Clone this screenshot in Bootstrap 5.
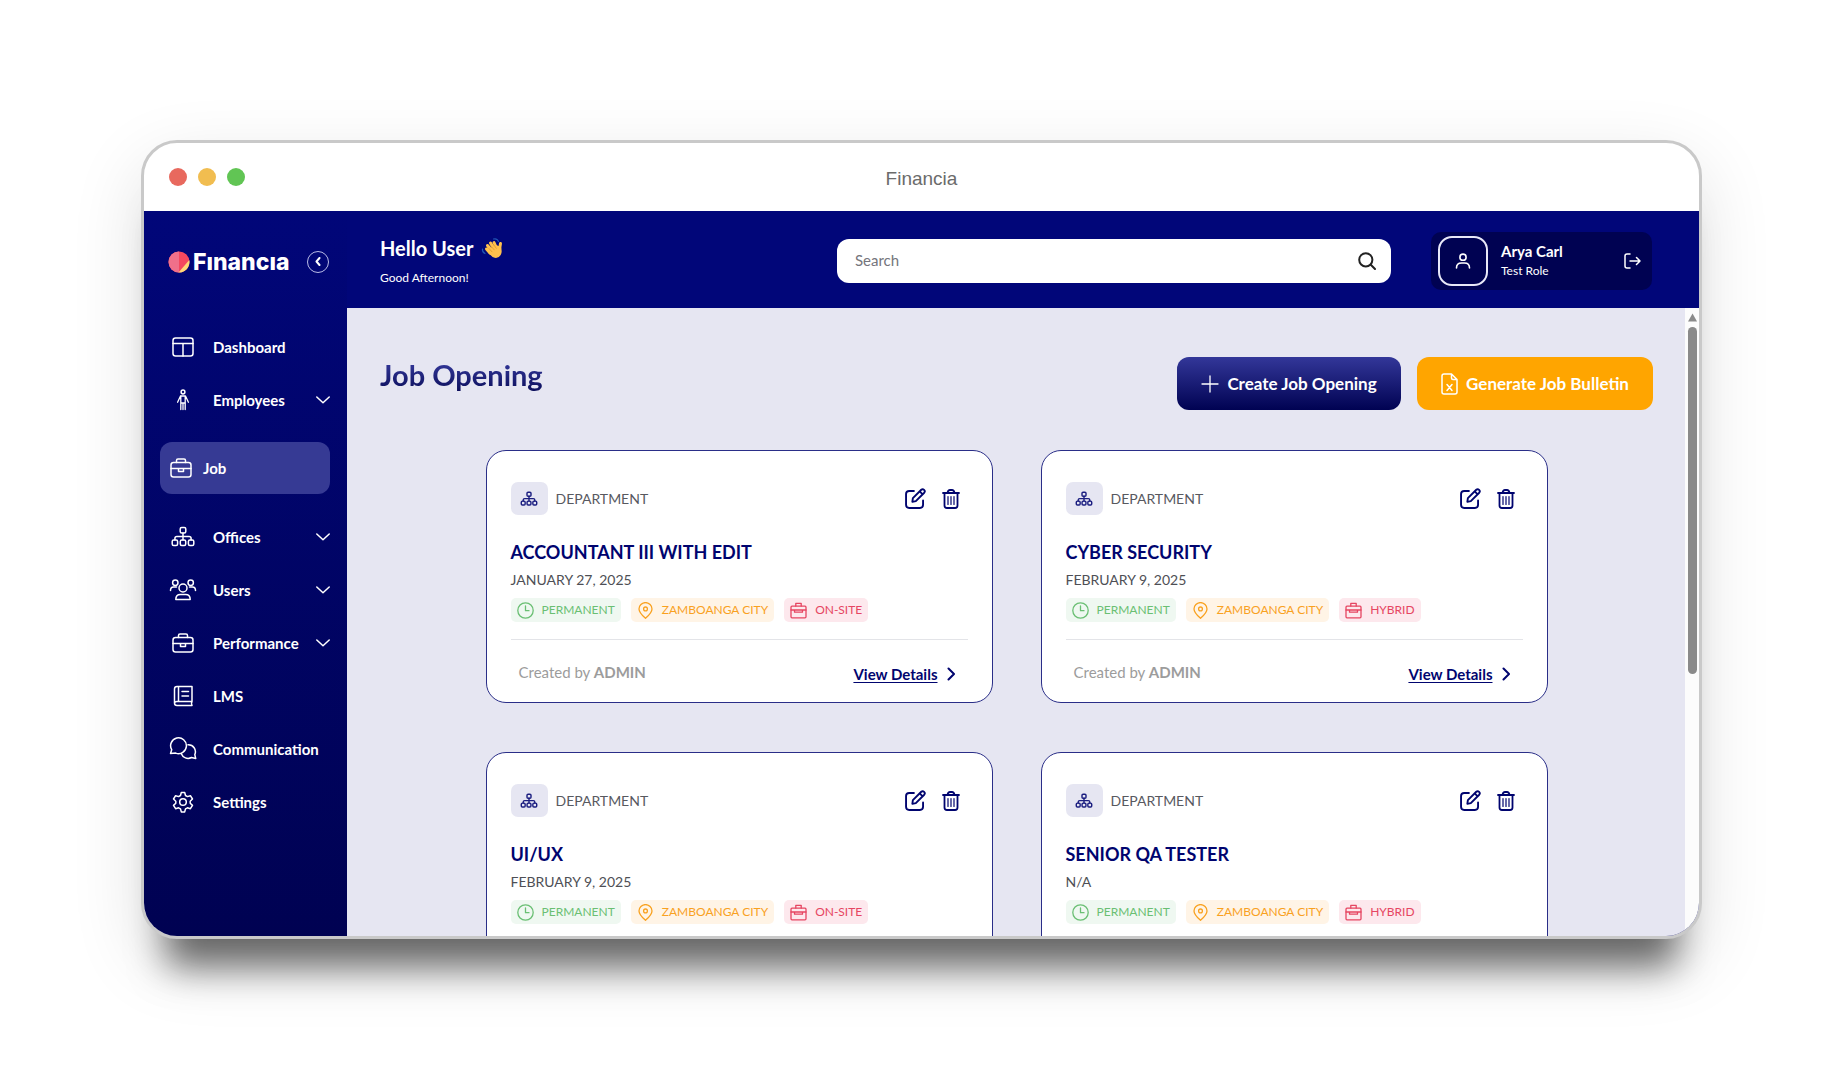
<!DOCTYPE html>
<html lang="en">
<head>
<meta charset="utf-8">
<meta name="viewport" content="width=device-width, initial-scale=1">
<title>Financia</title>
<link href="https://cdn.jsdelivr.net/npm/bootstrap@5.3.0/dist/css/bootstrap.min.css" rel="stylesheet">
<style>
  :root { --navy: #00046f; --navy-top: #010679; --navy-deep: #000252; --pale: #e6e6f2; }
  body { font-family: Lato, "Open Sans", sans-serif; background: #fff; color: #555; }
  svg { fill: none; stroke: currentColor; stroke-linecap: round; stroke-linejoin: round; flex: none; display: block; }
  svg.solid { stroke: none; }
  button { font-family: inherit; }
  .stage { padding: 140px 140px 141px 141px; height: 100vh; min-height: 700px; overflow: hidden; }
  .window { height: 100%; border: 3px solid #c9c9c9; border-radius: 36px; overflow: hidden; background: #fff;
    box-shadow: 0 53px 36px -25px rgba(0,0,0,.56), 0 24px 72px rgba(0,0,0,.12); }
  .titlebar { height: 68px; padding: 0 25px; display: grid; grid-template-columns: 1fr auto 1fr; align-items: center; flex: none; }
  .titlebar h1 { font: 400 19px/24px "Liberation Sans", Arial, sans-serif; color: #6b6b6b; margin: 0; padding-top: 3px; }
  .light { width: 18px; height: 18px; border-radius: 50%; }
  .app { background: linear-gradient(#010679, #000252); }
  .side { width: 203px; flex: none; color: #fff; }
  .brandrow { height: 109px; padding: 0 18px 8px 24px; }
  .wordmark { font: 800 23px/28px Inter, sans-serif; color: #fff; text-decoration: none; }
  .collapse-btn { width: 22px; height: 22px; border: 1px solid #b9bbe6; border-radius: 50%; background: none; color: #fff; padding: 0; }
  .menu a { height: 53px; margin: 0 17px 0 16px; padding-left: 9px; gap: 16px; color: #fff; text-decoration: none; font-size: 15px; font-weight: 700; line-height: 20px; }
  .menu svg { width: 28px; height: 28px; }
  .menu .chev { width: 14px; height: 14px; margin-left: auto; }
  .menu a.current { height: 52px; margin-top: 16px; margin-bottom: 16px; padding-left: 7px; gap: 8px; border-radius: 12px; background: #363a94; }
  .top { height: 97px; padding: 2px 47px 0 33px; color: #fff; background: var(--navy-top); flex: none; }
  .hello { font-size: 20px; line-height: 26px; font-weight: 700; margin: 0; }
  .greet { font-size: 12px; line-height: 18px; margin: 8px 0 0; }
  .searchbox { width: 554px; height: 44px; border-radius: 12px; background: #fff; color: #222; padding: 0 15px 0 16px; margin-right: 40px; }
  .searchbox input { border: 0; outline: 0; background: none; color: #555; font-size: 15px; }
  .searchbox input::placeholder { color: #75757c; opacity: 1; }
  .user { width: 221px; height: 58px; border-radius: 10px; background: #000252; padding: 0 11px 0 7px; }
  .face { width: 50px; height: 50px; border: 2px solid #e8e8f8; border-radius: 14px; }
  .who { font-size: 15px; line-height: 20px; font-weight: 700; }
  .role { font-size: 12px; line-height: 20px; }
  .plain { border: 0; background: none; padding: 0; color: inherit; }
  .page { background: var(--pale); overflow: hidden; }
  .content { padding: 49px 32px 0 33px; }
  .heading { font-size: 29px; line-height: 36px; font-weight: 700; margin: 0; color: transparent;
    background: linear-gradient(#333799 15%, #0c0f5c 95%); -webkit-background-clip: text; background-clip: text; }
  .act { height: 53px; border: 0; border-radius: 12px; color: #fff; font-size: 17px; line-height: 24px; font-weight: 700; gap: 8px; }
  .act-new { width: 224px; background: linear-gradient(#333799, #000252); }
  .act-gen { width: 236px; background: #ffa500; }
  .jobs { max-width: 1062px; margin: 40px auto 0; display: grid; grid-template-columns: 1fr 1fr; gap: 49px 48px; }
  .job { height: 253px; border: 1px solid #2a2e88; border-radius: 20px; background: #fff; padding: 31px 24px 0; }
  .tile { width: 37px; height: 33px; border-radius: 7px; background: var(--pale); color: #1b1e80; }
  .dept { font-size: 14px; line-height: 20px; color: #58595f; }
  .job h3 { font-size: 18px; line-height: 24px; font-weight: 700; color: var(--navy); margin: 25px 0 0; }
  .date { font-size: 14px; line-height: 20px; margin: 6px 0 0; color: #4e4f55; }
  .chips { margin-top: 8px; gap: 10px; }
  .chip { height: 24px; border-radius: 5px; padding: 0 6px; gap: 8px; font-size: 12px; line-height: 18px; }
  .chip-g { background: #eff8f1; color: #6abf73; }
  .chip-o { background: #fff4e6; color: #f9a11f; }
  .chip-r { background: #fde8ed; color: #e64562; }
  .foot { border-top: 1px solid #e3e4e8; margin-top: 17px; padding: 22px 13px 0 8px; }
  .by { font-size: 15px; line-height: 20px; color: #9c9c9c; }
  .more { font-size: 15px; line-height: 20px; font-weight: 700; color: var(--navy); gap: 9px; text-decoration: none; margin-top: 2px; }
  .more span { text-decoration: underline; text-underline-offset: 2px; }
  .track { width: 14px; background: #fcfcfc; padding: 5px 2px 0 3px; flex: none; }
  .thumb { height: 347px; border-radius: 5px; background: #8a8a8a; margin-top: 5px; }
</style>
<script src="https://cdn.jsdelivr.net/npm/bootstrap@5.3.0/dist/js/bootstrap.bundle.min.js"></script>
</head>
<body>
<svg class="d-none" aria-hidden="true">
  <symbol id="i-grid" viewBox="0 0 28 28"><rect x="4" y="5" width="20" height="18" rx="2.5"/><path d="M4 10.5h20M14 10.5V23"/></symbol>
  <symbol id="i-person" viewBox="0 0 28 28"><circle cx="14" cy="6" r="1.9"/><path d="M11.500 10h5l2.900 6.200M11.500 10l-2.900 6.200M11.800 10.500V23.500M16.200 10.500V23.500M14 17v6.500M11.800 17h4.400" stroke-width="1.300"/></symbol>
  <symbol id="i-case" viewBox="0 0 28 28"><rect x="4" y="8.500" width="20" height="14.500" rx="2.500"/><path d="M9.500 8.500V6.500q0-1.500 1.500-1.500h6q1.500 0 1.500 1.500v2M4 14.500h20M11.500 14.500v3h5v-3"/></symbol>
  <symbol id="i-org" viewBox="0 0 28 28"><rect x="11.200" y="4.500" width="5.600" height="5.600" rx="1.500"/><rect x="3.200" y="17" width="5.400" height="5.400" rx="1.500"/><rect x="11.300" y="17" width="5.400" height="5.400" rx="1.500"/><rect x="19.400" y="17" width="5.400" height="5.400" rx="1.500"/><path d="M14 10v7M5.900 17v-1.500q0-2 2-2h12.200q2 0 2 2V17"/></symbol>
  <symbol id="i-users" viewBox="0 0 28 28"><circle cx="14" cy="12" r="4"/><circle cx="6.300" cy="6.700" r="2.700"/><circle cx="21.700" cy="6.700" r="2.700"/><path d="M6.800 23.500q0-5 4.500-5h5.400q4.500 0 4.500 5zM1.500 14.500q0-3.500 3-3.500h3M26.500 14.500q0-3.500-3-3.500h-3"/></symbol>
  <symbol id="i-book" viewBox="0 0 28 28"><path d="M23 19.500V4.500H8Q5.500 4.500 5.500 7v14q0 2.500 2.500 2.500h15M23 19.500H8q-2.500 0-2.500 2M23 19.500q-1.200 2 0 4M9.500 4.500v15M13 9.500h6.500M13 14h6.500"/></symbol>
  <symbol id="i-chat" viewBox="0 0 28 28"><path d="M1.500 18.500l1.200-3.800a7.900 7.900 0 1 1 4 3.400zM19 9.800a7 7 0 0 1 6.800 9.800l.9 3.900-4.200-1a7.300 7.300 0 0 1-10.300-4"/></symbol>
  <symbol id="i-gear" viewBox="0 0 28 28"><circle cx="14" cy="14" r="3.300"/><path d="M12.300 4.500h3.400l.8 3 1.900 1.100 3-.9 2.100 3.300-2.300 2.200v2l2.300 2.200-2.100 3.300-3-.9-1.900 1.100-.8 3h-3.400l-.8-3-1.900-1.100-3 .9-2.100-3.300 2.300-2.200v-2l-2.300-2.200 2.100-3.300 3 .9 1.900-1.100z"/></symbol>
  <symbol id="i-down" viewBox="0 0 14 14"><path d="M.8 4l6.200 5.800L13.200 4"/></symbol>
  <symbol id="i-edit" viewBox="0 0 20 20"><path d="M8.500 2.800H4Q1 2.800 1 5.800V16q0 3 3 3h10.200q3 0 3-3v-4.200M7 13.200l.5-3.500 8-8q1.300-1.200 2.700.1t.1 2.700l-8 8zM14 3.200l2.800 2.800"/></symbol>
  <symbol id="i-trash" viewBox="0 0 18 20"><path d="M1 4h16M2.500 4v12.500Q2.500 19 5 19h8q2.500 0 2.500-2.500V4M5.500 4q.5-3 2.500-3h2q2 0 2.500 3"/><path d="M6 7.500v8M9 7.500v8M12 7.500v8" stroke-width="1.200"/></symbol>
  <symbol id="i-clock" viewBox="0 0 17 17"><circle cx="8.500" cy="8.500" r="7.700"/><path d="M8.500 4v4.700H12"/></symbol>
  <symbol id="i-pin" viewBox="0 0 17 17"><path d="M8.500 16.300Q2 10.500 2 6.900a6.500 6.300 0 0 1 13 0Q15 10.500 8.500 16.300z"/><circle cx="8.500" cy="6.900" r="1.900"/></symbol>
  <symbol id="i-kit" viewBox="0 0 17 17"><rect x="1" y="4.200" width="15" height="11.600" rx="1"/><path d="M5.800 4V1.300h5.400V4M1 8h3.500v2.200h8V8H16M4.500 8h8"/></symbol>
  <symbol id="i-next" viewBox="0 0 8 14"><path d="M1.500 1.500L7 7l-5.500 5.500"/></symbol>
</svg>

<div class="stage">
  <div class="window d-flex flex-column">
    <div class="titlebar">
      <div class="d-flex" style="gap:11px">
        <span class="light" style="background:#e8695e"></span>
        <span class="light" style="background:#f1bd50"></span>
        <span class="light" style="background:#61c554"></span>
      </div>
      <h1>Financia</h1>
    </div>

    <div class="app d-flex flex-grow-1 overflow-hidden">
      <aside class="side">
        <div class="brandrow d-flex align-items-center">
          <a class="wordmark d-flex align-items-center" href="#" aria-label="Financia" style="gap:3px">
            <svg class="solid" width="22" height="22" viewBox="0 0 22 22"><circle cx="11" cy="11" r="10.500" fill="#f4485f"/><path d="M11 .5a10.500 10.500 0 0 0 0 21z" fill="#f0708a"/><path d="M21.300 9A10.500 10.500 0 0 1 10.500 21.500z" fill="#ffd978"/></svg>
            <span>Fınancıa</span>
          </a>
          <button class="collapse-btn ms-auto d-flex align-items-center justify-content-center" aria-label="Collapse sidebar">
            <svg width="6" height="9" viewBox="0 0 6 9" stroke-width="2"><path d="M4.500 1L1.500 4.500l3 3.500"/></svg>
          </button>
        </div>
        <nav class="menu d-flex flex-column" aria-label="Main">
          <a class="d-flex align-items-center" href="#"><svg stroke-width="1.500"><use href="#i-grid"/></svg>Dashboard</a>
          <a class="d-flex align-items-center" href="#"><svg stroke-width="1.500"><use href="#i-person"/></svg>Employees<svg class="chev" stroke-width="1.500"><use href="#i-down"/></svg></a>
          <a class="current d-flex align-items-center" href="#" aria-current="page"><svg stroke-width="1.500"><use href="#i-case"/></svg>Job</a>
          <a class="d-flex align-items-center" href="#"><svg stroke-width="1.500"><use href="#i-org"/></svg>Offices<svg class="chev" stroke-width="1.500"><use href="#i-down"/></svg></a>
          <a class="d-flex align-items-center" href="#"><svg stroke-width="1.500"><use href="#i-users"/></svg>Users<svg class="chev" stroke-width="1.500"><use href="#i-down"/></svg></a>
          <a class="d-flex align-items-center" href="#"><svg stroke-width="1.500"><use href="#i-case"/></svg>Performance<svg class="chev" stroke-width="1.500"><use href="#i-down"/></svg></a>
          <a class="d-flex align-items-center" href="#"><svg stroke-width="1.500"><use href="#i-book"/></svg>LMS</a>
          <a class="d-flex align-items-center" href="#"><svg stroke-width="1.500"><use href="#i-chat"/></svg>Communication</a>
          <a class="d-flex align-items-center" href="#"><svg stroke-width="1.500"><use href="#i-gear"/></svg>Settings</a>
        </nav>
      </aside>

      <div class="d-flex flex-column flex-grow-1">
        <header class="top d-flex align-items-center">
          <div class="me-auto">
            <p class="hello d-flex align-items-center" style="gap:8px">Hello User
              <svg class="solid" width="22" height="22" viewBox="0 0 22 22" role="img" aria-label="Waving hand">
                <g stroke="#ffc04d" stroke-width="3"><path d="M9 16L5.500 12M11 14L6.500 8.500M13 12L9.500 6M15.500 11l-2.500-5.500M18.500 12.500l1-6"/></g>
                <path d="M7.500 13.500l6.500-6 6 2.500q1.500 5-.3 8-2 3.500-6 2.800-3-.8-6.200-4.800z" fill="#ffc04d"/>
                <path d="M8 11.500l3 3.300M10.300 9.500l3 3.400M12.800 7.800l2.500 3.500" stroke="#e09a2d" stroke-width=".8"/>
                <path d="M1.500 12q-.5 3 2.500 4.500M12.500 2q3.500-1 5 2.500" stroke="#1f55b5" stroke-width="1.200"/>
              </svg>
            </p>
            <p class="greet">Good Afternoon!</p>
          </div>
          <div class="searchbox d-flex align-items-center">
            <input class="flex-grow-1" type="search" placeholder="Search" aria-label="Search">
            <svg width="18" height="18" viewBox="0 0 18 18" stroke-width="2"><circle cx="7.800" cy="7.800" r="6.600"/><path d="M12.800 12.800L17 17"/></svg>
          </div>
          <div class="user d-flex align-items-center">
            <div class="face d-flex align-items-center justify-content-center">
              <svg width="16" height="16" viewBox="0 0 16 16" stroke-width="1.600"><circle cx="8" cy="4.200" r="3.100"/><path d="M1.500 15q0-5 5-5h3q5 0 5 5"/></svg>
            </div>
            <div style="margin-left:13px"><div class="who">Arya Carl</div><div class="role">Test Role</div></div>
            <button class="plain ms-auto" aria-label="Log out"><svg width="17" height="16" viewBox="0 0 17 16" stroke-width="1.500"><path d="M6 1H3Q1 1 1 3v10q0 2 2 2h3M6 8h10M12.500 4.500L16 8l-3.500 3.500"/></svg></button>
          </div>
        </header>

        <div class="d-flex flex-grow-1 overflow-hidden">
          <main class="page flex-grow-1">
            <div class="content">
              <div class="d-flex align-items-start">
                <h2 class="heading me-auto">Job Opening</h2>
                <div class="d-flex gap-3">
                  <button class="act act-new d-flex align-items-center justify-content-center"><svg width="18" height="18" viewBox="0 0 18 18" stroke-width="1.300"><path d="M9 1v16M1 9h16"/></svg>Create Job Opening</button>
                  <button class="act act-gen d-flex align-items-center justify-content-center"><svg width="17" height="22" viewBox="0 0 17 22" stroke-width="1.500"><path d="M3 1h7.500L16 6.500V19q0 2-2 2H3q-2 0-2-2V3q0-2 2-2zM10.500 1v4q0 1.500 1.500 1.500h4M6 11.500l5 6M11 11.500l-5 6"/></svg>Generate Job Bulletin</button>
                </div>
              </div>
              <div class="jobs" id="jobs"></div>
            </div>
          </main>
          <div class="track" aria-hidden="true">
            <svg class="solid" width="9" height="9" viewBox="0 0 9 9"><path d="M4.500 0.500L9 8.500H0z" fill="#8a8a8a"/></svg>
            <div class="thumb"></div>
          </div>
        </div>
      </div>
    </div>
  </div>
</div>

<script>
  const jobs = [
    ["ACCOUNTANT III WITH EDIT", "JANUARY 27, 2025", "ON-SITE"],
    ["CYBER SECURITY", "FEBRUARY 9, 2025", "HYBRID"],
    ["UI/UX", "FEBRUARY 9, 2025", "ON-SITE"],
    ["SENIOR QA TESTER", "N/A", "HYBRID"]
  ];
  document.getElementById("jobs").innerHTML = jobs.map(([title, date, mode]) => `
    <article class="job">
      <div class="d-flex align-items-center pe-2">
        <span class="tile d-flex align-items-center justify-content-center me-2"><svg width="20" height="20" stroke-width="2"><use href="#i-org"/></svg></span>
        <span class="dept me-auto">DEPARTMENT</span>
        <span class="d-flex gap-3" style="color:#00046f">
          <button class="plain" aria-label="Edit"><svg width="21" height="21" stroke-width="1.800"><use href="#i-edit"/></svg></button>
          <button class="plain" aria-label="Delete"><svg width="18" height="20" stroke-width="1.800"><use href="#i-trash"/></svg></button>
        </span>
      </div>
      <h3>${title}</h3>
      <p class="date">${date}</p>
      <div class="chips d-flex">
        <span class="chip chip-g d-flex align-items-center"><svg width="17" height="17" stroke-width="1.300"><use href="#i-clock"/></svg>PERMANENT</span>
        <span class="chip chip-o d-flex align-items-center"><svg width="17" height="17" stroke-width="1.300"><use href="#i-pin"/></svg>ZAMBOANGA CITY</span>
        <span class="chip chip-r d-flex align-items-center"><svg width="17" height="17" stroke-width="1.300"><use href="#i-kit"/></svg>${mode}</span>
      </div>
      <div class="foot d-flex justify-content-between align-items-start">
        <span class="by">Created by <b>ADMIN</b></span>
        <a class="more d-flex align-items-center" href="#"><span>View Details</span><svg width="8" height="14" stroke-width="2"><use href="#i-next"/></svg></a>
      </div>
    </article>`).join("");
</script>
</body>
</html>
